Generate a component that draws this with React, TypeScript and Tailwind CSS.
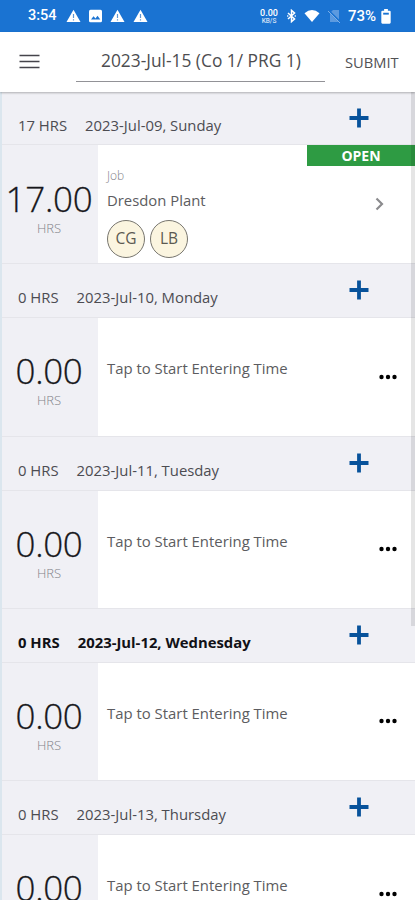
import React from "react";

type Day = { hours: string; total: string; date: string; today?: boolean; job?: string; crew?: string[] };

const days: Day[] = [
  { hours: "17 HRS", total: "17.00", date: "2023-Jul-09, Sunday", job: "Dresdon Plant", crew: ["CG", "LB"] },
  { hours: "0 HRS", total: "0.00", date: "2023-Jul-10, Monday" },
  { hours: "0 HRS", total: "0.00", date: "2023-Jul-11, Tuesday" },
  { hours: "0 HRS", total: "0.00", date: "2023-Jul-12, Wednesday", today: true },
  { hours: "0 HRS", total: "0.00", date: "2023-Jul-13, Thursday" },
];

function Warning() {
  return (
    <svg className="h-[14px] w-[15px] shrink-0" viewBox="0 0 15 14">
      <path d="M7.5 .8 14.5 13H.5Z" fill="#fff" />
      <path d="M7.5 5v4M7.5 10.2v1.3" stroke="#5b96d6" strokeWidth="1.2" />
    </svg>
  );
}

function StatusBar() {
  return (
    <div className="flex h-8 items-center bg-[#1a73d2] pl-[28px] pr-[24px] text-white">
      <span className="w-[38px] font-['Roboto',sans-serif] text-[14.5px] font-medium leading-8">3:54</span>
      <Warning />
      <svg className="ml-[8px] h-[14px] w-[13px] shrink-0" viewBox="0 0 13 14">
        <rect y=".7" width="13" height="12.6" rx="1.5" fill="#fff" />
        <path d="m2 10.5 2.5-3.2 2 2.2 2-2.8 2.8 3.8Z" fill="#1a73d2" />
      </svg>
      <span className="ml-[8px] flex gap-[8px]"><Warning /><Warning /></span>
      <div className="ml-auto flex items-center">
        <div className="mr-[9px] w-[18px] text-center font-['Roboto',sans-serif] font-medium">
          <div className="whitespace-nowrap text-[9px] leading-[10px]">0.00</div>
          <div className="whitespace-nowrap text-[6.5px] leading-[7px] opacity-80">KB/S</div>
        </div>
        <svg className="h-[14px] w-[9px]" viewBox="0 0 10 16">
          <path d="m1 4.500 7.500 7L5 14.500v-13l3.500 3-7.500 7" fill="none" stroke="#fff" strokeWidth="1.700" />
          <path d="M0 7.200h1.400v1.600H0zM8.600 7.200H10v1.600H8.600z" fill="#fff" />
        </svg>
        <svg className="ml-[8px] h-[14px] w-[16px]" viewBox="0 0 17 14">
          <path d="M.5 4Q8.500-2.500 16.500 4L8.500 13.500Z" fill="#fff" />
        </svg>
        <svg className="ml-[8px] h-[14px] w-[13px]" viewBox="0 0 13 14">
          <path d="M5 1h6v12H2V4Z" fill="#5c9adf" />
          <path d="m.5 1.500 12 12" stroke="#1a73d2" strokeWidth="2" />
          <path d="m0 2 12 12" stroke="#7eb0e8" />
        </svg>
        <span className="ml-[7px] w-[33px] whitespace-nowrap font-['Roboto',sans-serif] text-[15px] font-medium leading-8">73%</span>
        <svg className="h-[15px] w-[10px]" viewBox="0 0 10 16">
          <path d="M3 0h4v1.800h1.800q1.200 0 1.200 1.200v11.500q0 1.200-1.200 1.200H1.200Q0 15.700 0 14.500V3q0-1.200 1.200-1.200H3Z" fill="#fff" />
          <path d="M2 4h6v2H2Z" fill="#1a73d2" />
        </svg>
      </div>
    </div>
  );
}

function AppBar() {
  return (
    <header className="flex h-[60px] bg-white shadow-[0_1px_2px_rgba(0,0,0,0.28)]">
      <svg className="ml-[19px] mt-[21px] h-[16px] w-[21px]" viewBox="0 0 21 16">
        <path d="M.5 2.500h20M.5 8.500h20M.5 14.500h20" stroke="#45444b" strokeWidth="1.700" />
      </svg>
      <div className="ml-[36px] h-[50px] w-[249px] border-b border-[#929297] pl-[25px]">
        <span className="whitespace-nowrap text-[17.35px] leading-[57px] text-[#4d4d50]">2023-Jul-15 (Co 1/ PRG 1)</span>
      </div>
      <button className="ml-[20px] h-[60px] whitespace-nowrap text-[14.7px] leading-[58px] text-[#515154]">SUBMIT</button>
    </header>
  );
}

function DaySection({ day }: { day: Day }) {
  const tone = day.today ? "font-bold text-[#111116]" : "text-[#4c4c52]";
  const size = day.job ? "h-[54px]" : "h-[55px]";
  return (
    <section className="flex h-[172.33px] flex-col">
      <div className={`flex shrink-0 border-b border-t border-[#e5e5ea] bg-[#f0f0f5] pl-[18px] text-[14.85px] ${size} ${tone}`}>
        <span className="h-[52px] whitespace-nowrap pt-[22px] leading-[22px]">{day.hours}</span>
        <span className="ml-[18px] h-[52px] whitespace-nowrap pt-[22px] leading-[22px]">{day.date}</span>
        <svg className="ml-auto mr-[46px] mt-[16px] h-[20px] w-[20px] shrink-0" viewBox="0 0 20 20">
          <path d="M10 .5v19M.5 10h19" stroke="#07529b" strokeWidth="3.800" />
        </svg>
      </div>
      <div className="flex grow">
        <div className={`flex w-[98px] shrink-0 flex-col items-center bg-[#f0f0f5] ${day.job ? "pt-[34px]" : "pt-[33px]"}`}>
          <div className="whitespace-nowrap text-[35px] font-light leading-[40px] tracking-[-0.3px] text-[#17171b] [-webkit-text-stroke:0.3px_#17171b]">{day.total}</div>
          <div className="text-[13px] font-light leading-[18px] text-[#828289]">HRS</div>
        </div>
        {day.job ? (
          <div className="flex grow">
            <div className="ml-[9px] pt-[21px]">
              <div className="text-[12px] font-light leading-[20px] text-[#828289]">Job</div>
              <div className="whitespace-nowrap text-[14.85px] leading-[28px] text-[#5c5c60]">{day.job}</div>
              <div className="mt-[6px] flex gap-[5px]">
                {day.crew?.map((c) => (
                  <div key={c} className="flex size-[38px] items-center justify-center rounded-full border border-[#77756e] bg-[#fbf5e0] text-[15.5px] text-[#5c5a52]">{c}</div>
                ))}
              </div>
            </div>
            <div className="ml-auto flex w-[108px] flex-col">
              <div className="h-[20.500px] bg-[#2e9b43] text-center text-[14px] font-bold leading-[21px] text-white">OPEN</div>
              <svg className="ml-[68px] mt-[31px] h-[14px] w-[9px]" viewBox="0 0 9 14">
                <path d="m1.500 1.500 5.500 5.500-5.500 5.500" fill="none" stroke="#8b8b8e" strokeWidth="2.200" />
              </svg>
            </div>
          </div>
        ) : (
          <div className="flex grow">
            <span className="ml-[9px] whitespace-nowrap pt-[37px] text-[14.9px] leading-[26px] text-[#5c5c60]">Tap to Start Entering Time</span>
            <svg className="ml-auto mr-[18px] mt-[55.500px] h-[6px] w-[18px]" viewBox="0 0 18 6">
              <circle cx="2.500" cy="3" r="2.200" />
              <circle cx="9" cy="3" r="2.200" />
              <circle cx="15.500" cy="3" r="2.200" />
            </svg>
          </div>
        )}
      </div>
    </section>
  );
}

export default function App() {
  return (
    <div className="relative h-[900px] w-[415px] overflow-hidden bg-white font-['Open_Sans',sans-serif]">
      <div className="relative z-10">
        <StatusBar />
        <AppBar />
      </div>
      <main className="-mt-px">
        {days.map((day) => <DaySection key={day.date} day={day} />)}
      </main>
      <div className="absolute left-0 top-[92px] h-[808px] w-[2px] bg-[#dbe6ee]" />
      <div className="absolute right-0 top-[92px] h-[534px] w-[4px] bg-black/10" />
    </div>
  );
}
